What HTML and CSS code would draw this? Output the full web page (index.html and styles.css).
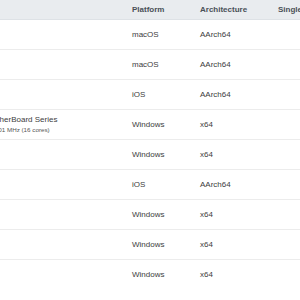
FILE: index.html
```html
<!DOCTYPE html>
<html>
<head>
<meta charset="utf-8">
<link rel="stylesheet" href="styles.css">
</head>
<body>
<div class="scroller">
<table class="results">
  <colgroup>
    <col class="c-name"><col class="c-plat"><col class="c-arch"><col class="c-score"><col class="c-score">
  </colgroup>
  <thead>
    <tr><th>System</th><th>Platform</th><th>Architecture</th><th>Single-Core Score</th><th>Multi-Core Score</th></tr>
  </thead>
  <tbody>
    <tr><td><div class="model">Apple MacBook Pro</div><div class="cpu">Apple M1 Pro 3228 MHz (10 cores)</div></td><td>macOS</td><td>AArch64</td><td></td><td></td></tr>
    <tr><td><div class="model">Apple Mac mini</div><div class="cpu">Apple M1 3200 MHz (8 cores)</div></td><td>macOS</td><td>AArch64</td><td></td><td></td></tr>
    <tr><td><div class="model">iPhone 13 Pro</div><div class="cpu">ARM 3230 MHz (6 cores)</div></td><td>iOS</td><td>AArch64</td><td></td><td></td></tr>
    <tr><td><div class="model">Gigabyte Technology Co., Ltd. MotherBoard Series</div><div class="cpu">AMD Ryzen 9 5950X 16-Core Processor 3401 MHz (16 cores)</div></td><td>Windows</td><td>x64</td><td></td><td></td></tr>
    <tr><td><div class="model">Dell Inc. XPS 15</div><div class="cpu">Intel Core i7 2600 MHz (6 cores)</div></td><td>Windows</td><td>x64</td><td></td><td></td></tr>
    <tr><td><div class="model">iPad Pro</div><div class="cpu">ARM 3200 MHz (8 cores)</div></td><td>iOS</td><td>AArch64</td><td></td><td></td></tr>
    <tr><td><div class="model">HP Pavilion</div><div class="cpu">Intel Core i5 3000 MHz (4 cores)</div></td><td>Windows</td><td>x64</td><td></td><td></td></tr>
    <tr><td><div class="model">LENOVO 20XX</div><div class="cpu">Intel Core i7 2800 MHz (4 cores)</div></td><td>Windows</td><td>x64</td><td></td><td></td></tr>
    <tr><td><div class="model">ASUS Laptop</div><div class="cpu">AMD Ryzen 7 3200 MHz (8 cores)</div></td><td>Windows</td><td>x64</td><td></td><td></td></tr>
  </tbody>
</table>
</div>
</body>
</html>
```
FILE: styles.css
```css
html, body {
  margin: 0;
  padding: 0;
  background: #fff;
  overflow: hidden;
}
body {
  font-family: "Liberation Sans", Arial, sans-serif;
  color: #444;
}
.scroller {
  width: 300px;
  height: 300px;
  overflow: hidden;
}
.results {
  margin-left: -131px;
  border-collapse: collapse;
  table-layout: fixed;
  width: 561px;
}
.c-name { width: 255px; }
.c-plat { width: 68px; }
.c-arch { width: 78px; }
.c-score { width: 80px; }
.results th {
  background: #e9ecef;
  height: 19px;
  padding: 0 8px;
  font-size: 8px;
  font-weight: bold;
  color: #495057;
  text-align: left;
  border-bottom: 1px solid #dee2e6;
  white-space: nowrap;
  overflow: hidden;
}
.results td {
  height: 29px;
  padding: 0 8px;
  font-size: 8px;
  text-align: left;
  vertical-align: middle;
  border-bottom: 1px solid #ececec;
  white-space: nowrap;
  overflow: hidden;
  color: #3d3d3d;
}
.results tbody tr:last-child td {
  border-bottom: none;
}
.results td:first-child {
  overflow: visible;
}
.model {
  font-size: 8px;
  line-height: 10px;
  color: #3d3d3d;
}
.cpu {
  font-size: 6.25px;
  line-height: 9px;
  color: #555;
}
```
